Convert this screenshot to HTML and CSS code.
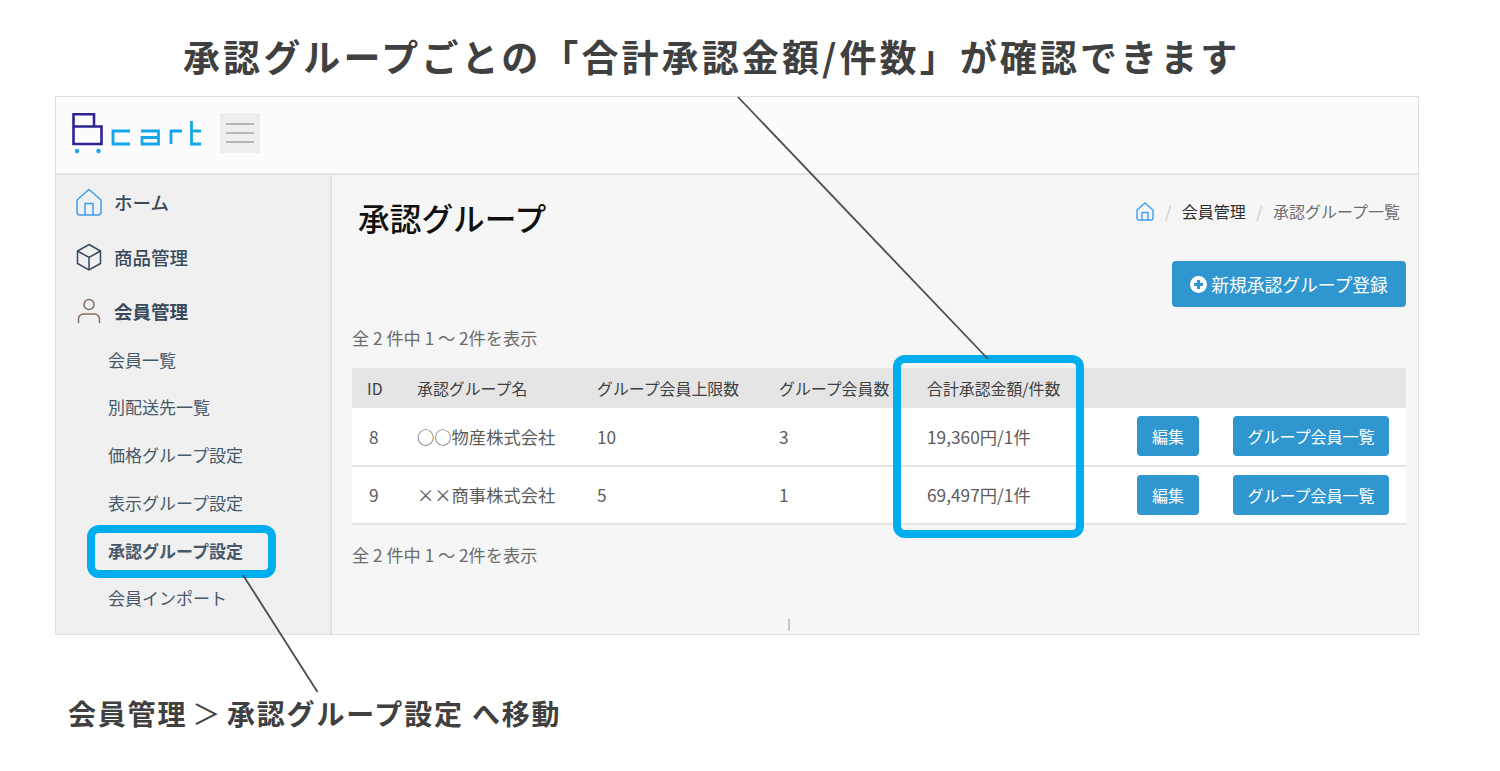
FILE: index.html
```html
<!DOCTYPE html>
<html lang="ja">
<head>
<meta charset="utf-8">
<title>承認グループ</title>
<link rel="stylesheet" href="styles.css">
</head>
<body>
<div class="slide">
  <h1 class="headline">承認グループごとの「合計承認金額/件数」が確認できます</h1>
  <div class="window">
    <header class="topbar">
      <svg class="logo" width="132" height="42" viewBox="0 0 132 42" fill="none">
        <path d="M1.500 1.200H22V13.500H29.500V31H1.500Z M1.500 13.500H22" stroke="#2b2491" stroke-width="2.600"/>
        <circle cx="5" cy="38" r="2.200" fill="#14a6ec"/>
        <circle cx="26.500" cy="38" r="2.200" fill="#14a6ec"/>
        <path d="M58 18H41V31H58 M69 18H86.500V31H70V24.500H86.500 M99 31V18H110 M119.500 8V31H129 M119.500 18H129" stroke="#14a6ec" stroke-width="2.800"/>
      </svg>
      <button class="burger" aria-label="menu"><span></span><span></span><span></span></button>
    </header>
    <div class="body">
      <nav class="sidebar">
        <a class="nav"><svg class="nav-ico" width="26" height="28" viewBox="0 0 26 28" fill="none" stroke="#3f9df0" stroke-width="1.500"><path d="M13 1.500L25 12V24a3 3 0 0 1-3 3H4a3 3 0 0 1-3-3V12Z"/><path d="M9 27V15.500H17V27"/></svg>ホーム</a>
        <a class="nav"><svg class="nav-ico" width="26" height="28" viewBox="0 0 26 28" fill="none" stroke="#33475f" stroke-width="1.500"><path d="M13 1.500L24.500 8V20.500L13 27L1.500 20.500V8Z"/><path d="M1.500 8L13 14.500L24.500 8M13 14.500V27"/></svg>商品管理</a>
        <a class="nav nav-open"><svg class="nav-ico" width="26" height="28" viewBox="0 0 26 28" fill="none" stroke="#8a6a5c" stroke-width="1.500"><circle cx="13" cy="7.500" r="5"/><path d="M2.500 26V22a5 5 0 0 1 5-5h11a5 5 0 0 1 5 5v4"/></svg>会員管理</a>
        <ul class="sub">
          <li>会員一覧</li>
          <li>別配送先一覧</li>
          <li>価格グループ設定</li>
          <li>表示グループ設定</li>
          <li class="current">承認グループ設定</li>
          <li>会員インポート</li>
        </ul>
      </nav>
      <main class="content">
        <div class="title-row">
          <h2 class="page-title">承認グループ</h2>
          <ol class="crumbs">
            <li><svg width="18" height="19" viewBox="0 0 18 19" fill="none" stroke="#3f9df0" stroke-width="1.400"><path d="M9 1L17 8V16a2 2 0 0 1-2 2H3a2 2 0 0 1-2-2V8Z"/><path d="M6 18V10.500H12V18"/></svg></li>
            <li class="sep">/</li>
            <li class="crumb-link">会員管理</li>
            <li class="sep">/</li>
            <li>承認グループ一覧</li>
          </ol>
        </div>
        <div class="action-row">
          <a class="btn btn-new"><svg width="17" height="17" viewBox="0 0 17 17"><circle cx="8.500" cy="8.500" r="8.500" fill="#fff"/><path d="M8.500 4V13M4 8.500H13" stroke="#2f96d0" stroke-width="3.200"/></svg>新規承認グループ登録</a>
        </div>
        <p class="count">全 2 件中 1 ～ 2件を表示</p>
        <table class="grid">
          <colgroup>
            <col class="c-id"><col class="c-name"><col class="c-limit"><col class="c-members"><col class="c-total"><col class="c-edit"><col class="c-list">
          </colgroup>
          <thead>
            <tr><th>ID</th><th>承認グループ名</th><th>グループ会員上限数</th><th>グループ会員数</th><th class="total">合計承認金額/件数</th><th></th><th></th></tr>
          </thead>
          <tbody>
            <tr><td>8</td><td>○○物産株式会社</td><td>10</td><td>3</td><td class="total">19,360円/1件</td><td><a class="btn btn-sm">編集</a></td><td><a class="btn btn-sm btn-wide">グループ会員一覧</a></td></tr>
            <tr><td>9</td><td>××商事株式会社</td><td>5</td><td>1</td><td class="total">69,497円/1件</td><td><a class="btn btn-sm">編集</a></td><td><a class="btn btn-sm btn-wide">グループ会員一覧</a></td></tr>
          </tbody>
        </table>
        <p class="count count-bottom">全 2 件中 1 ～ 2件を表示</p>
      </main>
    </div>
  </div>
  <p class="caption">会員管理<span class="gt">＞</span>承認グループ設定 へ移動</p>

  <div class="callout callout-total"></div>
  <div class="callout callout-nav"></div>
  <svg class="leaders" width="1500" height="771" viewBox="0 0 1500 771" fill="none" stroke="#4d4d4d" stroke-width="1.800">
    <path d="M738 97L988 359"/>
    <path d="M243 575L317.500 692"/>
    <path d="M789 619V631" stroke="#999" stroke-width="1"/>
  </svg>
</div>
</body>
</html>
```
FILE: styles.css
```css
* { box-sizing: border-box; }
html, body { margin: 0; padding: 0; }
body {
  background: #fff;
  font-family: "Noto Sans CJK JP", "Noto Sans", sans-serif;
  color: #4a4a4a;
}
.slide {
  position: relative;
  width: 1500px;
  height: 771px;
  overflow: hidden;
  padding: 29px 81px 0 55px;
}
.headline {
  margin: 0 0 0 128px;
  height: 67px;
  font-size: 37px;
  line-height: 54px;
  font-weight: 700;
  letter-spacing: 3.100px;
  white-space: nowrap;
  color: #404040;
}
.window {
  width: 1364px;
  height: 539px;
  border: 1px solid #dedede;
  display: flex;
  flex-direction: column;
  background: #f6f6f6;
}
.topbar {
  height: 78px;
  flex: none;
  display: flex;
  align-items: center;
  padding: 0 0 4px 16px;
  background: #fcfcfc;
  border-bottom: 2px solid #e4e4e4;
}
.logo { flex: none; margin-top: 2px; }
.burger {
  width: 40px;
  height: 40px;
  margin-left: 16px;
  padding: 0 6px;
  border: 0;
  background: #eeeeee;
  display: flex;
  flex-direction: column;
  justify-content: center;
  gap: 7px;
}
.burger span { display: block; height: 2px; background: #b5b5b5; }
.body { flex: 1; display: flex; min-height: 0; }
.sidebar {
  width: 276px;
  flex: none;
  background: #f0f0f0;
  border-right: 2px solid #e2e2e2;
  padding: 13px 0 0 20px;
}
.nav {
  display: flex;
  align-items: center;
  gap: 12px;
  height: 28px;
  margin-bottom: 26.500px;
  font-size: 18.500px;
  font-weight: 500;
  color: #3a4a5c;
}
.nav-open { font-weight: 700; margin-bottom: 0; }
.nav-ico { flex: none; }
.sub {
  list-style: none;
  margin: 10.500px 0 0 32px;
  padding: 0;
  font-size: 17px;
  color: #46586a;
}
.sub li { height: 47.800px; line-height: 47.800px; white-space: nowrap; }
.sub .current { font-weight: 700; }
.content { flex: 1; padding: 0 12px 0 20px; min-width: 0; }
.title-row {
  display: flex;
  justify-content: space-between;
  height: 86px;
  padding-top: 19px;
}
.page-title {
  margin: 0 0 0 6px;
  font-size: 31.700px;
  line-height: 46px;
  font-weight: 500;
  color: #111;
}
.crumbs {
  list-style: none;
  display: flex;
  align-items: center;
  gap: 10.500px;
  margin: 0;
  padding: 0 6px 0 0;
  height: 34px;
  font-size: 16px;
  color: #6e6e6e;
}
.crumbs li { display: flex; align-items: center; }
.crumbs .sep { color: #c8c8c8; }
.crumbs .crumb-link { color: #2c2c2c; }
.action-row { display: flex; justify-content: flex-end; height: 64px; }
.btn {
  display: inline-flex;
  align-items: center;
  justify-content: center;
  color: #fff;
  background: #2f96d0;
  border-radius: 4px;
  white-space: nowrap;
}
.btn-new {
  width: 234px;
  height: 46px;
  gap: 4px;
  font-size: 17.800px;
}
.count {
  margin: 0;
  height: 43px;
  font-size: 17.200px;
  line-height: 26px;
  color: #6b6b6b;
}
.grid {
  width: 1054px;
  border-collapse: collapse;
  table-layout: fixed;
  font-size: 17.300px;
  color: #5c5c5c;
}
.c-id { width: 65px; }
.c-name { width: 180px; }
.c-limit { width: 182px; }
.c-members { width: 148px; }
.c-total { width: 210px; }
.c-edit { width: 96px; }
.c-list { width: 173px; }
.grid th {
  height: 40px;
  background: #e5e5e5;
  padding: 0;
  text-align: left;
  font-weight: 400;
  font-size: 15.900px;
  color: #3f3f3f;
  white-space: nowrap;
}
.grid th:first-child { padding-left: 15px; }
.grid td:first-child { padding-left: 17px; }
.grid td {
  height: 58px;
  padding: 0 0 1px;
  background: #fff;
  border-bottom: 2px solid #e4e4e4;
  white-space: nowrap;
}
.grid .total { padding-left: 0; }
.btn-sm {
  width: 62px;
  height: 40px;
  font-size: 16px;
  vertical-align: middle;
}
.btn-wide { width: 156px; }
.count-bottom { margin-top: 16px; height: 28px; line-height: 28px; }
.caption {
  margin: 58px 0 0 13px;
  font-size: 28px;
  line-height: 40px;
  font-weight: 700;
  letter-spacing: 1.800px;
  color: #404040;
  white-space: nowrap;
}
.gt { font-weight: 400; margin: 0 5px; }
.leaders { position: absolute; left: 0; top: 0; pointer-events: none; }
.callout {
  position: absolute;
  border: 8px solid #00aeef;
  border-radius: 12px;
}
.callout-total { left: 893px; top: 355px; width: 191px; height: 183px; }
.callout-nav { left: 87px; top: 525px; width: 189px; height: 53px; }
```
